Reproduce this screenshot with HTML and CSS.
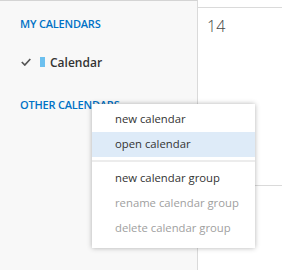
FILE: index.html
```html
<!DOCTYPE html>
<html lang="en">
<head>
  <meta charset="UTF-8" />
  <title>Calendar</title>
  <link rel="stylesheet" href="styles.css">
</head>
<body>
  <div class="app">
    <aside class="sidebar">
      <h2 class="group-title">My calendars</h2>
      <div class="cal-row">
        <svg class="check" width="10" height="8" viewBox="0 0 10 8">
          <path d="M0.8 4 L3.8 7 L9.3 1" fill="none" stroke="#555" stroke-width="1.7"/>
        </svg>
        <span class="swatch"></span>
        <span class="cal-name">Calendar</span>
      </div>
      <h2 class="group-title other">Other calendars</h2>
    </aside>

    <main class="day">
      <div class="day-head"></div>
      <div class="day-cell">
        <span class="day-num">14</span>
      </div>
    </main>
  </div>

  <ul class="context-menu">
    <li>new calendar</li>
    <li class="hover">open calendar</li>
    <li class="sep"></li>
    <li>new calendar group</li>
    <li class="disabled">rename calendar group</li>
    <li class="disabled">delete calendar group</li>
  </ul>
</body>
</html>
```

FILE: styles.css
```css
body {
  margin: 0;
  font-family: 'Open Sans', 'Liberation Sans', sans-serif;
  background-color: #fff;
  color: #333;
}
.app {
  display: flex;
  height: 270px;
}
.sidebar {
  width: 198px;
  background-color: #f8f8f8;
  border-top: 1px solid #d4d4d4;
  border-right: 1px solid #dadada;
  padding: 15px 0 0 20px;
  box-sizing: border-box;
  flex-shrink: 0;
}
.group-title {
  margin: 0;
  font-size: 11px;
  font-weight: 600;
  text-transform: uppercase;
  color: #0072c6;
  letter-spacing: -0.2px;
}
.group-title.other {
  margin-top: 23px;
}
.cal-row {
  display: flex;
  align-items: center;
  height: 24px;
  margin-top: 19px;
  padding-left: 1px;
}
.check {
  margin-right: 9px;
}
.swatch {
  width: 5px;
  height: 10px;
  background-color: #6cc0ef;
  margin-right: 5px;
}
.cal-name {
  font-size: 12px;
  font-weight: 600;
  color: #333;
}
.day {
  flex: 1;
}
.day-head {
  height: 7px;
  border-bottom: 1px solid #dadada;
}
.day-cell {
  height: 178px;
  border-bottom: 1px solid #dadada;
  padding: 7px 0 0 9px;
  box-sizing: border-box;
}
.day-num {
  font-size: 16px;
  font-weight: 300;
  color: #444;
}
.context-menu {
  position: absolute;
  left: 92px;
  top: 104px;
  width: 163px;
  margin: 0;
  padding: 3px 0 7px;
  list-style: none;
  background: #fff;
  box-sizing: border-box;
  box-shadow: 0 0 5px rgba(0,0,0,0.3);
}
.context-menu li {
  height: 25px;
  line-height: 23px;
  padding-left: 23px;
  font-size: 11.3px;
  color: #333;
}
.context-menu li.hover {
  background-color: #deebf8;
}
.context-menu li.sep {
  height: 0;
  margin: 3px 0 4px;
  border-top: 2px solid #ececec;
}
.context-menu li.disabled {
  color: #a0a0a0;
}
```
